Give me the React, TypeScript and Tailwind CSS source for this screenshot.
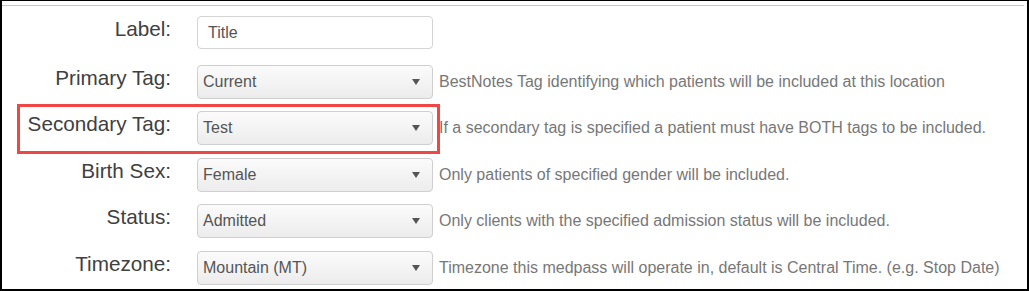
import React from 'react'

const Caret = () => (
  <svg width="8" height="6" viewBox="0 0 8 6" className="shrink-0">
    <path d="M0 0 L8 0 L4 6 Z" fill="#555" />
  </svg>
)

type Row = {
  label: string
  value: string
  help?: string
  select?: boolean
  mt: string
  highlight?: boolean
}

const rows: Row[] = [
  { label: 'Label:', value: 'Title', mt: 'mt-0' },
  {
    label: 'Primary Tag:',
    value: 'Current',
    select: true,
    help: 'BestNotes Tag identifying which patients will be included at this location',
    mt: 'mt-[16px]',
  },
  {
    label: 'Secondary Tag:',
    value: 'Test',
    select: true,
    help: 'If a secondary tag is specified a patient must have BOTH tags to be included.',
    mt: 'mt-[12px]',
    highlight: true,
  },
  {
    label: 'Birth Sex:',
    value: 'Female',
    select: true,
    help: 'Only patients of specified gender will be included.',
    mt: 'mt-[13px]',
  },
  {
    label: 'Status:',
    value: 'Admitted',
    select: true,
    help: 'Only clients with the specified admission status will be included.',
    mt: 'mt-[12px]',
  },
  {
    label: 'Timezone:',
    value: 'Mountain (MT)',
    select: true,
    help: 'Timezone this medpass will operate in, default is Central Time. (e.g. Stop Date)',
    mt: 'mt-[13px]',
  },
]

const FormRow = ({ row }: { row: Row }) => {
  return (
    <div className={`relative flex items-start ${row.mt}`}>
      {row.highlight && (
        <div className="absolute left-[15px] top-[-7px] w-[423px] h-[50px] border-[3px] border-[#ef4646] pointer-events-none" />
      )}
      <div className="w-[169px] pt-[3px] text-right text-[20.7px] leading-none text-[#404040]">
        {row.label}
      </div>
      {row.select ? (
        <div className="ml-[26px] w-[236px] h-[34px] shrink-0 flex items-center justify-between pl-[5px] pr-[12px] border border-[#cfcfcf] rounded-[4px] bg-gradient-to-b from-[#fbfbfb] to-[#ececec] text-[16px] text-[#555]">
          <span>{row.value}</span>
          <Caret />
        </div>
      ) : (
        <div className="ml-[26px] w-[236px] h-[33px] shrink-0 flex items-center pl-[10px] border border-[#d4d4d4] rounded-[4px] bg-white text-[16px] text-[#555]">
          {row.value}
        </div>
      )}
      {row.help && (
        <div className="ml-[6px] h-[34px] flex items-center text-[16px] text-[#777] whitespace-nowrap">
          {row.help}
        </div>
      )}
    </div>
  )
}

export default function App() {
  return (
    <div className="w-[1029px] h-[291px] bg-white border-t border-l-2 border-r-2 border-b-2 border-black overflow-hidden font-['Liberation_Sans',Arial,sans-serif]">
      <div className="mt-[4px] mr-[3px] h-px bg-[#c8c8c8]" />
      <div className="pt-[10px] flex flex-col">
        {rows.map((row) => (
          <FormRow key={row.label} row={row} />
        ))}
      </div>
    </div>
  )
}
